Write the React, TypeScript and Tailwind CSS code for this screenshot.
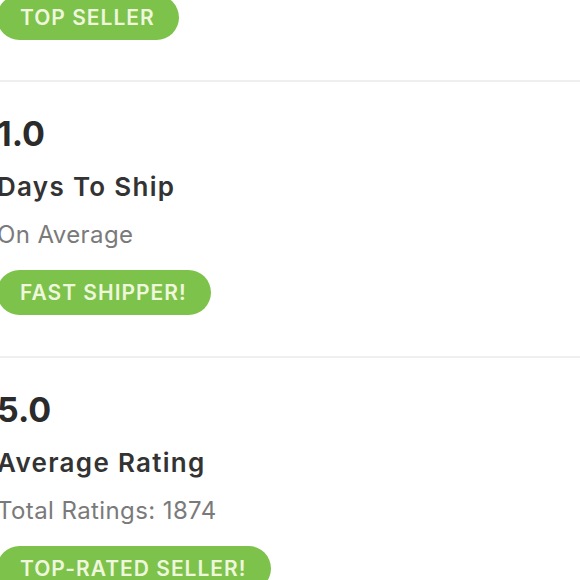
const FONT = "font-['Inter','Open_Sans',sans-serif]"

interface StatProps {
  value: string
  title: string
  subtitle: string
  badge: string
}

function Badge({ label }: { label: string }) {
  return (
    <div className="flex">
      <span className="flex h-[45px] items-center rounded-full bg-[#7dc24b] pl-[23px] pr-[24px] text-[21px] font-semibold tracking-[1px] text-[#eef7dc]">
        {label}
      </span>
    </div>
  )
}

function Divider() {
  return <div className="h-[2px] w-full bg-[#efefef]" />
}

function Stat({ value, title, subtitle, badge }: StatProps) {
  return (
    <section className="flex flex-col">
      <div className="mt-[35px] text-[34px] font-bold leading-[34px] text-[#2b2b2b]">{value}</div>
      <div className="mt-[23px] text-[26px] font-semibold leading-[26px] tracking-[1.3px] text-[#333333]">{title}</div>
      <div className="mt-[23px] text-[24px] leading-[24px] tracking-[0.4px] text-[#7a7a7a]">{subtitle}</div>
      <div className="mt-[23px] mb-[41px]">
        <Badge label={badge} />
      </div>
      <Divider />
    </section>
  )
}

export default function App() {
  return (
    <div className={`h-[580px] w-[580px] overflow-hidden bg-white ${FONT}`}>
      <div className="ml-[-3px] mt-[-5px] flex flex-col">
        <div className="mb-[40px]">
          <Badge label="TOP SELLER" />
        </div>
        <Divider />
        <Stat value="1.0" title="Days To Ship" subtitle="On Average" badge="FAST SHIPPER!" />
        <Stat value="5.0" title="Average Rating" subtitle="Total Ratings: 1874" badge="TOP-RATED SELLER!" />
      </div>
    </div>
  )
}
